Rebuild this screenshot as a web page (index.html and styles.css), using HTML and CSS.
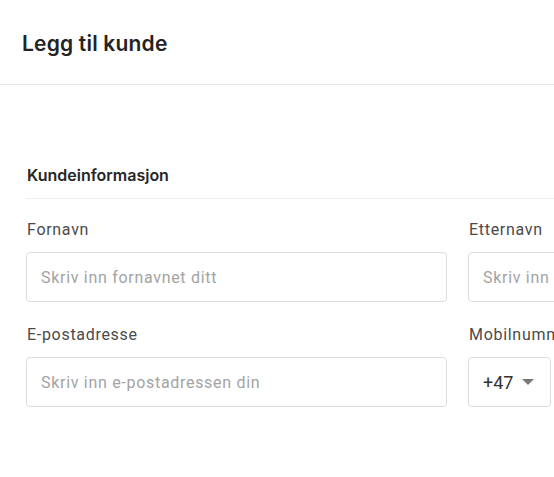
FILE: index.html
```html
<!DOCTYPE html>
<html lang="no">

<head>
  <meta charset="UTF-8" />
  <title>Legg til kunde</title>
  <link rel="stylesheet" href="styles.css">
</head>

<body>

  <div class="topp">
    <h1 class="tittel">Legg til kunde</h1>
  </div>

  <div class="innhold">
    <h2 class="seksjon">Kundeinformasjon</h2>

    <div class="rad">
      <div class="felt">
        <label for="fornavn">Fornavn</label>
        <input type="text" id="fornavn" placeholder="Skriv inn fornavnet ditt">
      </div>
      <div class="felt">
        <label for="etternavn">Etternavn</label>
        <input type="text" id="etternavn" placeholder="Skriv inn etternavnet ditt">
      </div>
    </div>

    <div class="rad">
      <div class="felt">
        <label for="epost">E-postadresse</label>
        <input type="text" id="epost" placeholder="Skriv inn e-postadressen din">
      </div>
      <div class="felt">
        <label for="mobil">Mobilnummer</label>
        <div class="telefon">
          <div class="landkode">+47 <span class="pil"></span></div>
          <input type="text" id="mobil" placeholder="Skriv inn mobilnummeret ditt">
        </div>
      </div>
    </div>
  </div>

</body>

</html>
```

FILE: styles.css
```css
body {
  margin: 0;
  background: #fff;
  font-family: Roboto, "Liberation Sans", sans-serif;
  overflow: hidden;
  width: 554px;
  height: 477px;
}

.topp {
  height: 84px;
  padding: 0 22px;
  display: flex;
  align-items: center;
  border-bottom: 1px solid #e4e4e4;
}

.tittel {
  margin: 2px 0 0;
  font-family: Inter, "Liberation Sans", sans-serif;
  font-size: 21px;
  font-weight: 600;
  color: #232323;
  letter-spacing: 0.2px;
}

.innhold {
  width: 864px;
  padding: 79px 0 0 26px;
}

.seksjon {
  margin: 0;
  padding: 0 0 12px 1px;
  font-family: Inter, "Liberation Sans", sans-serif;
  font-size: 16px;
  font-weight: 600;
  color: #262626;
  line-height: 22px;
  border-bottom: 1px solid #efefef;
}

.rad {
  display: grid;
  grid-template-columns: 421px 421px;
  gap: 21px;
  margin-top: 21px;
}

.rad + .rad {
  margin-top: 23px;
}

.felt label {
  display: block;
  padding-left: 1px;
  font-size: 16px;
  line-height: 20px;
  letter-spacing: 0.7px;
  color: #4a4a4a;
  margin-bottom: 12px;
}

input {
  box-sizing: border-box;
  width: 100%;
  height: 50px;
  padding: 0 14px;
  border: 1px solid #dcdcdc;
  border-radius: 4px;
  font-family: Roboto, "Liberation Sans", sans-serif;
  font-size: 16px;
  letter-spacing: 0.7px;
  color: #333;
}

input::placeholder {
  color: #a3a3a3;
}

.telefon {
  display: flex;
  gap: 10px;
}

.landkode {
  box-sizing: border-box;
  flex: none;
  width: 83px;
  height: 50px;
  padding: 0 14px;
  border: 1px solid #dcdcdc;
  border-radius: 4px;
  display: flex;
  align-items: center;
  gap: 9px;
  font-size: 18px;
  color: #333;
}

.pil {
  width: 0;
  height: 0;
  border-left: 6px solid transparent;
  border-right: 6px solid transparent;
  border-top: 6px solid #777;
}
```
